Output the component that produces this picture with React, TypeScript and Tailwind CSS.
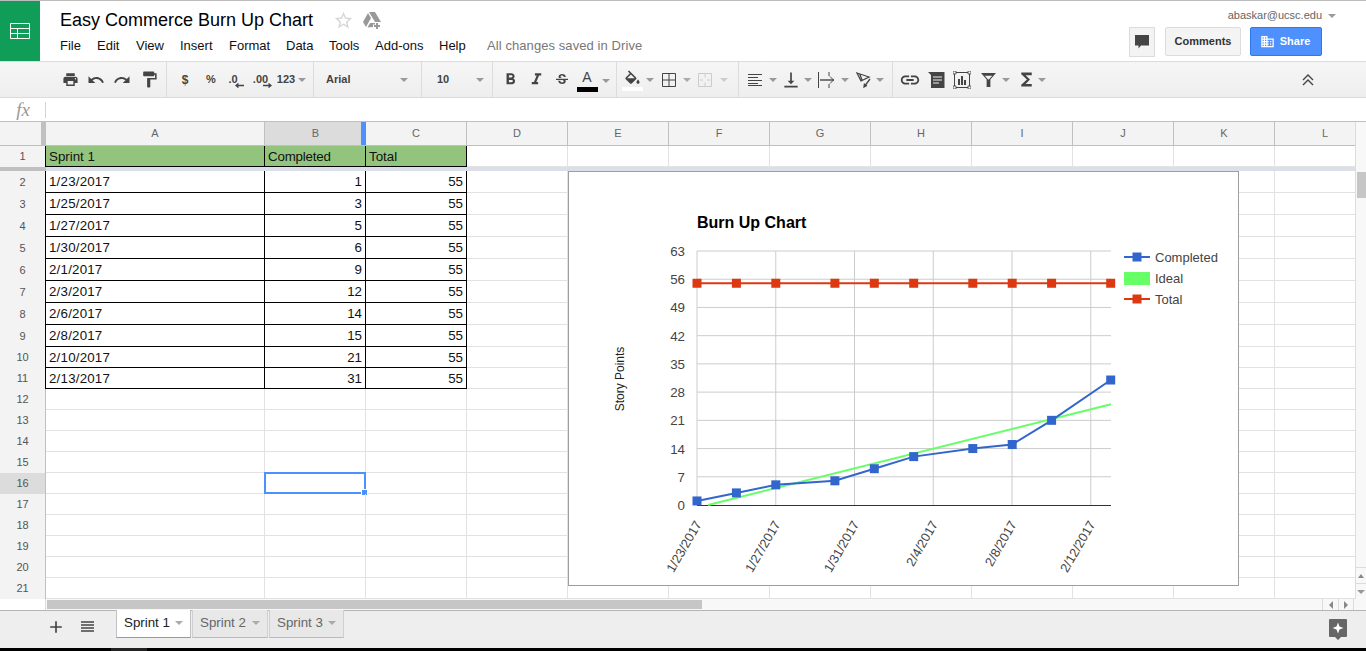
import { ReactNode } from 'react';
import {
  MdPrint,
  MdUndo,
  MdRedo,
  MdFormatPaint,
  MdFormatBold,
  MdFormatItalic,
  MdStrikethroughS,
  MdVerticalAlignBottom,
  MdLink,
  MdFunctions,
  MdDomain,
  MdStarBorder,
  MdAdd,
} from 'react-icons/md';

const COLUMNS = ['D', 'E', 'F', 'G', 'H', 'I', 'J', 'K', 'L'];

const SPRINT = [
  ['1/23/2017', 1],
  ['1/25/2017', 3],
  ['1/27/2017', 5],
  ['1/30/2017', 6],
  ['2/1/2017', 9],
  ['2/3/2017', 12],
  ['2/6/2017', 14],
  ['2/8/2017', 15],
  ['2/10/2017', 21],
  ['2/13/2017', 31],
] as const;

const DAYS = [0, 2, 4, 7, 9, 11, 14, 16, 18, 21];
const X_TICKS = ['1/23/2017', '1/27/2017', '1/31/2017', '2/4/2017', '2/8/2017', '2/12/2017'];
const Y_TICKS = [0, 7, 14, 21, 28, 35, 42, 49, 56, 63];

const px = (day: number) => 697 + day * 19.7;
const py = (value: number) => 505 - (value * 254) / 63;

function Caret({ className = '' }: { className?: string }) {
  return (
    <span
      className={
        'inline-block h-0 w-0 shrink-0 border-x-[4px] border-t-[4px] border-x-transparent border-t-[#999] ' + className
      }
    />
  );
}

function Tool({ className, children }: { className: string; children?: ReactNode }) {
  return <div className={'flex h-full shrink-0 items-center justify-center ' + className}>{children}</div>;
}

function Group({ className, children }: { className: string; children: ReactNode }) {
  return <div className={'flex h-full shrink-0 items-center border-r border-[#dcdcdc] ' + className}>{children}</div>;
}

function Toolbar() {
  return (
    <div className="flex h-[36px] shrink-0 border-b border-[#dadada] bg-gradient-to-b from-[#f6f6f6] to-[#eeeeee] text-[11px] font-bold text-[#444]">
      <Group className="w-[167px] pl-[57px]">
        <Tool className="w-[26px]"><MdPrint size={17} /></Tool>
        <Tool className="w-[26px]"><MdUndo size={18} /></Tool>
        <Tool className="w-[26px]"><MdRedo size={18} /></Tool>
        <Tool className="w-[28px]"><MdFormatPaint size={19} /></Tool>
      </Group>
      <Group className="w-[147px] pl-[5px]">
        <Tool className="w-[26px] text-[12px]">$</Tool>
        <Tool className="w-[26px]">%</Tool>
        <Tool className="w-[26px]">
          <div className="relative -mt-[1px] -translate-x-[4px]">
            .0
            <svg className="absolute left-[7px] top-[12px]" width="9" height="5" viewBox="0 0 9 5">
              <path d="M9 2.500H2M3.500 .5 1 2.500l2.500 2" fill="none" stroke="#444" strokeWidth="1.4" />
            </svg>
          </div>
        </Tool>
        <Tool className="w-[25px]">
          <div className="relative -mt-[1px] -translate-x-[2px]">
            .00
            <svg className="absolute left-[10px] top-[12px]" width="9" height="5" viewBox="0 0 9 5">
              <path d="M0 2.500h7M5.500 .5 8 2.500l-2.500 2" fill="none" stroke="#444" strokeWidth="1.4" />
            </svg>
          </div>
        </Tool>
        <Tool className="w-[22px]">123</Tool>
        <Tool className="w-[9px]"><Caret /></Tool>
      </Group>
      <Group className="w-[108px] justify-between pl-[12px] pr-[13px]">
        <span>Arial</span>
        <Caret />
      </Group>
      <Group className="w-[71px] justify-between pl-[15px] pr-[8px]">
        <span>10</span>
        <Caret />
      </Group>
      <Group className="w-[124px] pl-[4px]">
        <Tool className="w-[26px]"><MdFormatBold size={19} /></Tool>
        <Tool className="w-[26px]"><MdFormatItalic size={19} /></Tool>
        <Tool className="w-[26px]"><MdStrikethroughS size={16} /></Tool>
        <Tool className="w-[24px]">
          <div className="flex flex-col items-center pt-[3px]">
            <span className="text-[14px] font-normal leading-[15px]">A</span>
            <span className="mt-[2px] h-[5px] w-[21px] bg-black" />
          </div>
        </Tool>
        <Tool className="w-[14px]"><Caret className="mt-[3px]" /></Tool>
      </Group>
      <Group className="w-[122px] pl-[2px]">
        <Tool className="w-[26px]">
          <div className="flex flex-col items-center">
            <svg width="19" height="17" viewBox="0 0 24 18" fill="#444">
              <path d="M16.56 8.94 7.62 0 6.21 1.41l2.38 2.38-5.15 5.15c-.59.59-.59 1.54 0 2.12l5.5 5.5c.29.29.68.44 1.06.44s.77-.15 1.06-.44l5.5-5.5c.59-.58.59-1.53 0-2.12zM5.21 10 10 5.21 14.79 10H5.21zM19 11.5s-2 2.17-2 3.5c0 1.1.9 2 2 2s2-.9 2-2c0-1.33-2-3.5-2-3.5z" />
            </svg>
            <span className="mt-[1px] h-[4px] w-[21px] bg-white" />
          </div>
        </Tool>
        <Tool className="w-[10px]"><Caret /></Tool>
        <Tool className="w-[28px]">
          <svg width="14" height="14" viewBox="0 0 14 14" fill="none" stroke="#444">
            <path d="M.5.5h13v13H.5zM7 .5v13M.5 7h13" />
          </svg>
        </Tool>
        <Tool className="w-[8px]"><Caret className="border-t-[#aaa]" /></Tool>
        <Tool className="w-[28px]">
          <svg width="14" height="14" viewBox="0 0 14 14" fill="none" stroke="#ccc">
            <path d="M.5.5h13v13H.5zM7 .5v4M7 9.500v4M2 7h3M9 7h3" />
          </svg>
        </Tool>
        <Tool className="w-[10px]"><Caret className="border-t-[#ccc]" /></Tool>
      </Group>
      <Group className="w-[154px] pl-[5px]">
        <Tool className="w-[22px]">
          <svg width="14" height="12" viewBox="0 0 14 12" stroke="#444">
            <path d="M0 .5h14M0 3.500h10M0 6.500h14M0 9.500h10" />
            <path d="M0 11.500h14" />
          </svg>
        </Tool>
        <Tool className="w-[14px]"><Caret /></Tool>
        <Tool className="w-[22px]">
          <MdVerticalAlignBottom size={20} />
        </Tool>
        <Tool className="w-[12px]"><Caret /></Tool>
        <Tool className="w-[26px]">
          <svg width="18" height="16" viewBox="0 0 18 16" fill="none" stroke="#444">
            <path d="M.5 0v16" />
            <path d="M2 8h14" strokeWidth="1.4" />
            <path d="M12 4.500 15.500 8 12 11.500M11 0v4M11 12v4" />
          </svg>
        </Tool>
        <Tool className="w-[9px]"><Caret /></Tool>
        <Tool className="w-[30px]">
          <svg width="16" height="16" viewBox="0 0 16 16" fill="none" stroke="#444" strokeWidth="1.3">
            <path d="M1 1 13 5 5 9zM3.500 1.500 6 8" />
            <path d="M14 7 8 15M8.500 11.500l-.5 3.500 3-1.500" />
          </svg>
        </Tool>
        <Tool className="w-[2px]"><Caret /></Tool>
      </Group>
      <div className="flex h-full items-center pl-[4px]">
        <Tool className="w-[26px]"><MdLink size={22} /></Tool>
        <Tool className="w-[26px]">
          <svg width="17" height="16" viewBox="0 0 17 16">
            <path d="M0 0h16.500v16H3V3z" fill="#444" />
            <path d="M5 5h9M5 8h9M5 11h6" stroke="#eee" />
          </svg>
        </Tool>
        <Tool className="w-[26px]">
          <svg width="18" height="18" viewBox="0 0 18 18">
            <path d="M1.500 1.500h15v15h-15z" fill="none" stroke="#444" />
            <path d="M0 0h3v3H0zM15 0h3v3h-3zM0 15h3v3H0zM15 15h3v3h-3z" fill="#eee" stroke="#444" strokeWidth=".8" />
            <path d="M5 8h2v6H5zM8 5h2v9H8zM11 9h2v5h-2z" fill="#444" />
          </svg>
        </Tool>
        <Tool className="w-[26px]">
          <svg width="15" height="14" viewBox="0 0 16 15">
            <path d="M0 0h16L10 7v8H6V7zM4 3l3.600 4h.8L12 3z" fill="#444" fillRule="evenodd" />
          </svg>
        </Tool>
        <Tool className="w-[10px]"><Caret /></Tool>
        <Tool className="ml-[3px] w-[24px]"><MdFunctions size={21} /></Tool>
        <Tool className="w-[8px]"><Caret /></Tool>
      </div>
      <Tool className="ml-[252px] w-[20px]">
        <svg width="12" height="12" viewBox="0 0 12 12" fill="none" stroke="#444" strokeWidth="1.4">
          <path d="M1 6 6 1l5 5M1 11l5-5 5 5" />
        </svg>
      </Tool>
    </div>
  );
}

function Header() {
  const menu: [string, string][] = [
    ['File', 'w-[37px]'],
    ['Edit', 'w-[39px]'],
    ['View', 'w-[44px]'],
    ['Insert', 'w-[49px]'],
    ['Format', 'w-[57px]'],
    ['Data', 'w-[43px]'],
    ['Tools', 'w-[46px]'],
    ['Add-ons', 'w-[64px]'],
    ['Help', 'w-[48px]'],
  ];
  return (
    <div className="flex h-[62px] shrink-0 border-y border-[#bdbdbd] border-b-[#dcdcdc]">
      <div className="flex w-[40px] items-center justify-center bg-[#0f9d58]">
        <svg width="20" height="17" viewBox="0 0 20 17" fill="none" stroke="#fff">
          <path d="M.5.5h19v15H.5zM.5 5.500h19M.5 10.500h19M7.500 5.500v10" />
        </svg>
      </div>
      <div className="ml-[20px] flex flex-col">
        <div className="flex h-[36px] items-center pt-[3px]">
          <span className="text-[18px] text-black">Easy Commerce Burn Up Chart</span>
          <MdStarBorder className="ml-[20px]" size={21} color="#d6d6d6" />
          <svg className="ml-[9px]" width="19" height="17" viewBox="0 0 19 17" fill="#999">
            <path d="M6 0h6l6 10h-6zM5 1l3 5-5 9-3-5zM4.500 15.500 7 11h5v1.500h-2V15z" />
            <path d="M13 11h2v2h2v2h-2v2h-2v-2h-2v-2h2z" />
          </svg>
        </div>
        <div className="flex h-[17px] items-center text-[13px] text-[#111]">
          {menu.map(([label, width]) => (
            <span key={label} className={width}>
              {label}
            </span>
          ))}
          <span className="tracking-[0.08px] text-[#777]">All changes saved in Drive</span>
        </div>
      </div>
      <div className="ml-auto flex w-[237px] flex-col pr-[44px] pt-[7px]">
        <div className="-mr-[14px] flex h-[15px] items-center justify-end text-[11px] text-[#666]">
          <span>abaskar@ucsc.edu</span>
          <Caret className="ml-[6px] border-t-[#777]" />
        </div>
        <div className="mt-[4px] flex items-start">
          <button className="flex h-[30px] w-[26px] items-center justify-center border border-[#dcdcdc] bg-[#f3f3f3]">
            <svg width="14" height="14" viewBox="0 0 14 14" fill="#444">
              <path d="M0 0h14v10.500H6L3.500 13.500v-3H0z" />
            </svg>
          </button>
          <button className="ml-[10px] h-[29px] w-[76px] rounded-[2px] border border-[#dcdcdc] bg-[#f4f4f4] text-[11px] font-bold text-[#333]">
            Comments
          </button>
          <button className="ml-[9px] flex h-[29px] w-[72px] items-center justify-center rounded-[2px] border border-[#3079ed] bg-[#4d90fe] pr-[2px] text-[11px] font-bold text-white">
            <MdDomain size={15} className="mr-[5px]" />
            Share
          </button>
        </div>
      </div>
    </div>
  );
}

function FormulaBar() {
  return (
    <div className="flex h-[24px] shrink-0 items-center border-b border-[#c0c0c0] bg-white">
      <div className="flex w-[46px] items-center justify-center pb-[1px] font-['Liberation_Serif',serif] text-[19px] italic leading-none text-[#999]">
        fx
      </div>
      <div className="h-[16px] w-px -translate-x-[1px] bg-[#d5d5d5]" />
    </div>
  );
}

function ColumnHeaders() {
  return (
    <div className="flex h-[24px] shrink-0 border-b border-[#c0c0c0] bg-[#f3f3f3] text-[11px] text-[#666]">
      <div className="flex w-[46px] shrink-0 justify-end border-r border-[#c0c0c0]">
        <div className="w-[4px] bg-[#c0c0c0]" />
      </div>
      <div className="flex w-[219px] shrink-0 items-center justify-center border-r border-[#c0c0c0]">A</div>
      <div className="relative flex w-[101px] shrink-0 items-center justify-center bg-[#dcdcdc]">
        B
        <div className="absolute right-0 top-0 h-full w-[5px] bg-[#4d90fe]" />
      </div>
      <div className="flex w-[101px] shrink-0 items-center justify-center border-r border-[#c0c0c0]">C</div>
      {COLUMNS.map((col) => (
        <div key={col} className="flex w-[101px] shrink-0 items-center justify-center border-r border-[#c0c0c0]">
          {col}
        </div>
      ))}
    </div>
  );
}

function Cell({
  className,
  dark,
  children,
}: {
  className: string;
  dark?: boolean;
  children?: ReactNode;
}) {
  return (
    <div
      className={
        'flex shrink-0 items-center border-b border-r px-[3px] pt-[1px] text-[13.33px] text-[#111] ' +
        (dark ? 'border-black ' : 'border-[#e2e2e2] ') +
        className
      }
    >
      {children}
    </div>
  );
}

function Row({
  n,
  height,
  cells,
  green,
  selected,
}: {
  n: number;
  height: string;
  cells?: [string, string, string];
  green?: boolean;
  selected?: boolean;
}) {
  const bg = green ? 'bg-[#93c47d] ' : '';
  return (
    <div className={'flex shrink-0 ' + height}>
      <div
        className={
          'flex w-[46px] shrink-0 items-center justify-center border-r text-[11px] text-[#555] ' +
          (cells ? 'border-black ' : 'border-[#c0c0c0] ') +
          (selected ? 'bg-[#dcdcdc]' : 'bg-[#f3f3f3]')
        }
      >
        {n}
      </div>
      <Cell dark={!!cells} className={bg + 'w-[219px] ' + (green ? '' : 'tracking-[0.2px]')}>
        {cells?.[0]}
      </Cell>
      <Cell dark={!!cells} className={bg + 'relative w-[101px] ' + (green ? 'tracking-[-0.2px]' : 'justify-end')}>
        {cells?.[1]}
        {selected && (
          <>
            <div className="absolute -bottom-px -left-px -right-px -top-px border-2 border-[#4d90fe]" />
            <div className="absolute -bottom-[3px] -right-[3px] h-[7px] w-[7px] border border-white bg-[#4d90fe]" />
          </>
        )}
      </Cell>
      <Cell dark={!!cells} className={bg + 'w-[101px] ' + (green ? '' : 'justify-end')}>
        {cells?.[2]}
      </Cell>
      {COLUMNS.map((col) => (
        <Cell key={col} className="w-[101px]" />
      ))}
    </div>
  );
}

function Marker({ x, y, color }: { x: number; y: number; color: string }) {
  return <rect x={x - 4.5} y={y - 4.5} width="9" height="9" fill={color} />;
}

function Chart() {
  const blue = '#3366cc';
  const red = '#dc3912';
  const completed = SPRINT.map((row, i) => `${px(DAYS[i])},${py(row[1])}`).join(' ');
  const total = DAYS.map((d) => `${px(d)},${py(55)}`).join(' ');

  return (
    <div className="absolute left-[568px] top-[49px] h-[415px] w-[671px] border border-[#9e9e9e] bg-white">
      <svg width="669" height="413" viewBox="569 172 669 413" fontFamily="'Liberation Sans', Arial, sans-serif">
        <text x="697" y="228" fontSize="16" fontWeight="bold" fill="#000">
          Burn Up Chart
        </text>
        <text x="624" y="379" fontSize="12" fill="#222" textAnchor="middle" transform="rotate(-90 624 379)">
          Story Points
        </text>

        {Y_TICKS.map((v) => (
          <g key={v}>
            {v > 0 && <path d={`M697 ${py(v)}H1111`} stroke="#cccccc" />}
            <text x="685" y={py(v) + 5} fontSize="13.33" fill="#444" textAnchor="end">
              {v}
            </text>
          </g>
        ))}
        {X_TICKS.map((label, i) => {
          const x = 697 + i * 78.75;
          return (
            <g key={label}>
              <path d={`M${x} 251V505`} stroke="#cccccc" />
              <text
                x={x + 5}
                y="524"
                fontSize="12.8"
                fill="#444"
                textAnchor="end"
                transform={`rotate(-60 ${x + 5} 524)`}
              >
                {label}
              </text>
            </g>
          );
        })}
        <path d="M697 505.500H1111" stroke="#333" />

        <polyline points={`708,505 1111,${py(25)}`} fill="none" stroke="#66ff66" strokeWidth="2" />
        <polyline points={total} fill="none" stroke={red} strokeWidth="2" />
        <polyline points={completed} fill="none" stroke={blue} strokeWidth="2" />
        {DAYS.map((d) => (
          <Marker key={d} x={px(d)} y={py(55)} color={red} />
        ))}
        {SPRINT.map((row, i) => (
          <Marker key={row[0]} x={px(DAYS[i])} y={py(row[1])} color={blue} />
        ))}

        <path d="M1124 257h26" stroke={blue} strokeWidth="2" />
        <Marker x={1137} y={257} color={blue} />
        <rect x="1124" y="272" width="26" height="13" fill="#66ff66" />
        <path d="M1124 299h26" stroke={red} strokeWidth="2" />
        <Marker x={1137} y={299} color={red} />
        <g fontSize="13" fill="#444">
          <text x="1155" y="262">Completed</text>
          <text x="1155" y="283">Ideal</text>
          <text x="1155" y="304">Total</text>
        </g>
      </svg>
    </div>
  );
}

function Grid() {
  const tall = 'h-[22px]';
  const short = 'h-[21px]';
  return (
    <div className="relative min-w-0 flex-1 overflow-hidden">
      <ColumnHeaders />
      <Row n={1} height={short} green cells={['Sprint 1', 'Completed', 'Total']} />
      <div className="flex h-[4px]">
        <div className="w-[46px] shrink-0 bg-[#c0c0c0]" />
        <div className="flex-1 bg-[#dadfe8]" />
      </div>
      {SPRINT.map((row, i) => (
        <Row
          key={row[0]}
          n={i + 2}
          height={i < 8 ? tall : short}
          cells={[row[0], String(row[1]), '55']}
        />
      ))}
      {Array.from({ length: 10 }, (_, i) => (
        <Row key={i} n={i + 12} height={short} selected={i + 12 === 16} />
      ))}
      <Chart />
    </div>
  );
}

function VerticalScrollbar() {
  return (
    <div className="flex w-[11px] shrink-0 flex-col border-l border-[#dcdcdc] bg-[#f8f8f8]">
      <div className="h-[50px] shrink-0" />
      <div className="mx-auto h-[26px] w-[9px] shrink-0 bg-[#c6c6c6]" />
      <div className="flex-1" />
      <div className="flex h-[16px] items-center justify-center border-t border-[#dcdcdc]">
        <span className="h-0 w-0 border-x-[3px] border-b-[4px] border-x-transparent border-b-[#888]" />
      </div>
      <div className="flex h-[16px] items-center justify-center border-t border-[#dcdcdc]">
        <Caret className="border-x-[3px] border-t-[4px]" />
      </div>
    </div>
  );
}

function HorizontalScrollbar() {
  return (
    <div className="flex h-[12px] shrink-0 border-b border-[#b5b5b5] bg-[#f8f8f8]">
      <div className="w-[46px] shrink-0 border-r border-[#dcdcdc] bg-white" />
      <div className="ml-px mt-px h-[9px] w-[655px] bg-[#c6c6c6]" />
      <div className="ml-auto flex w-[16px] items-center justify-center border-l border-[#dcdcdc]">
        <span className="h-0 w-0 border-y-[4px] border-r-[4px] border-y-transparent border-r-[#888]" />
      </div>
      <div className="flex w-[16px] items-center justify-center border-x border-[#dcdcdc]">
        <span className="h-0 w-0 border-y-[4px] border-l-[4px] border-y-transparent border-l-[#888]" />
      </div>
      <div className="w-[12px]" />
    </div>
  );
}

function Tab({ label, width, active }: { label: string; width: string; active?: boolean }) {
  return (
    <div
      className={
        '-mt-px flex h-[28px] shrink-0 items-center justify-between border-b border-x pb-[1px] pl-[7px] pr-[7px] text-[13.33px] ' +
        width +
        (active
          ? ' border-[#c0c0c0] border-b-[#999] bg-white text-[#222]'
          : ' border-[#d0d0d0] border-b-[#bbb] bg-[#e8e8e8] text-[#666]')
      }
    >
      <span>{label}</span>
      <Caret className="border-t-[#aaa]" />
    </div>
  );
}

function TabBar() {
  return (
    <div className="flex h-[37px] shrink-0 bg-[#eeeeee]">
      <button className="ml-[41px] flex h-[31px] w-[30px] items-center justify-center text-[#444]">
        <MdAdd size={20} />
      </button>
      <button className="ml-px flex h-[31px] w-[30px] items-center justify-center">
        <svg width="13" height="12" viewBox="0 0 13 12" stroke="#444">
          <path d="M0 1h13M0 4h13M0 7h13M0 10h13" strokeWidth="1.6" />
        </svg>
      </button>
      <div className="ml-[14px] flex gap-px">
        <Tab label="Sprint 1" width="w-[75px]" active />
        <Tab label="Sprint 2" width="w-[76px]" />
        <Tab label="Sprint 3" width="w-[75px]" />
      </div>
      <div className="ml-auto mr-[19px] flex h-full items-center">
        <svg width="18" height="21" viewBox="0 0 18 21">
          <path d="M1 0h16a1 1 0 0 1 1 1v16a1 1 0 0 1-1 1h-5l-3 3-3-3H1a1 1 0 0 1-1-1V1a1 1 0 0 1 1-1z" fill="#666" />
          <path d="M9 3.500 10.500 7.500 14.500 9 10.500 10.500 9 14.500 7.500 10.500 3.500 9 7.500 7.500z" fill="#fff" />
        </svg>
      </div>
    </div>
  );
}

export default function App() {
  return (
    <div className="flex h-[651px] w-[1366px] flex-col overflow-hidden bg-white font-['Liberation_Sans',Arial,sans-serif]">
      <Header />
      <Toolbar />
      <FormulaBar />
      <div className="flex h-[477px] shrink-0">
        <Grid />
        <VerticalScrollbar />
      </div>
      <HorizontalScrollbar />
      <TabBar />
      <div className="h-[3px] shrink-0 bg-black">
        <div className="ml-[111px] h-full w-[36px] bg-[#222]" />
      </div>
    </div>
  );
}
